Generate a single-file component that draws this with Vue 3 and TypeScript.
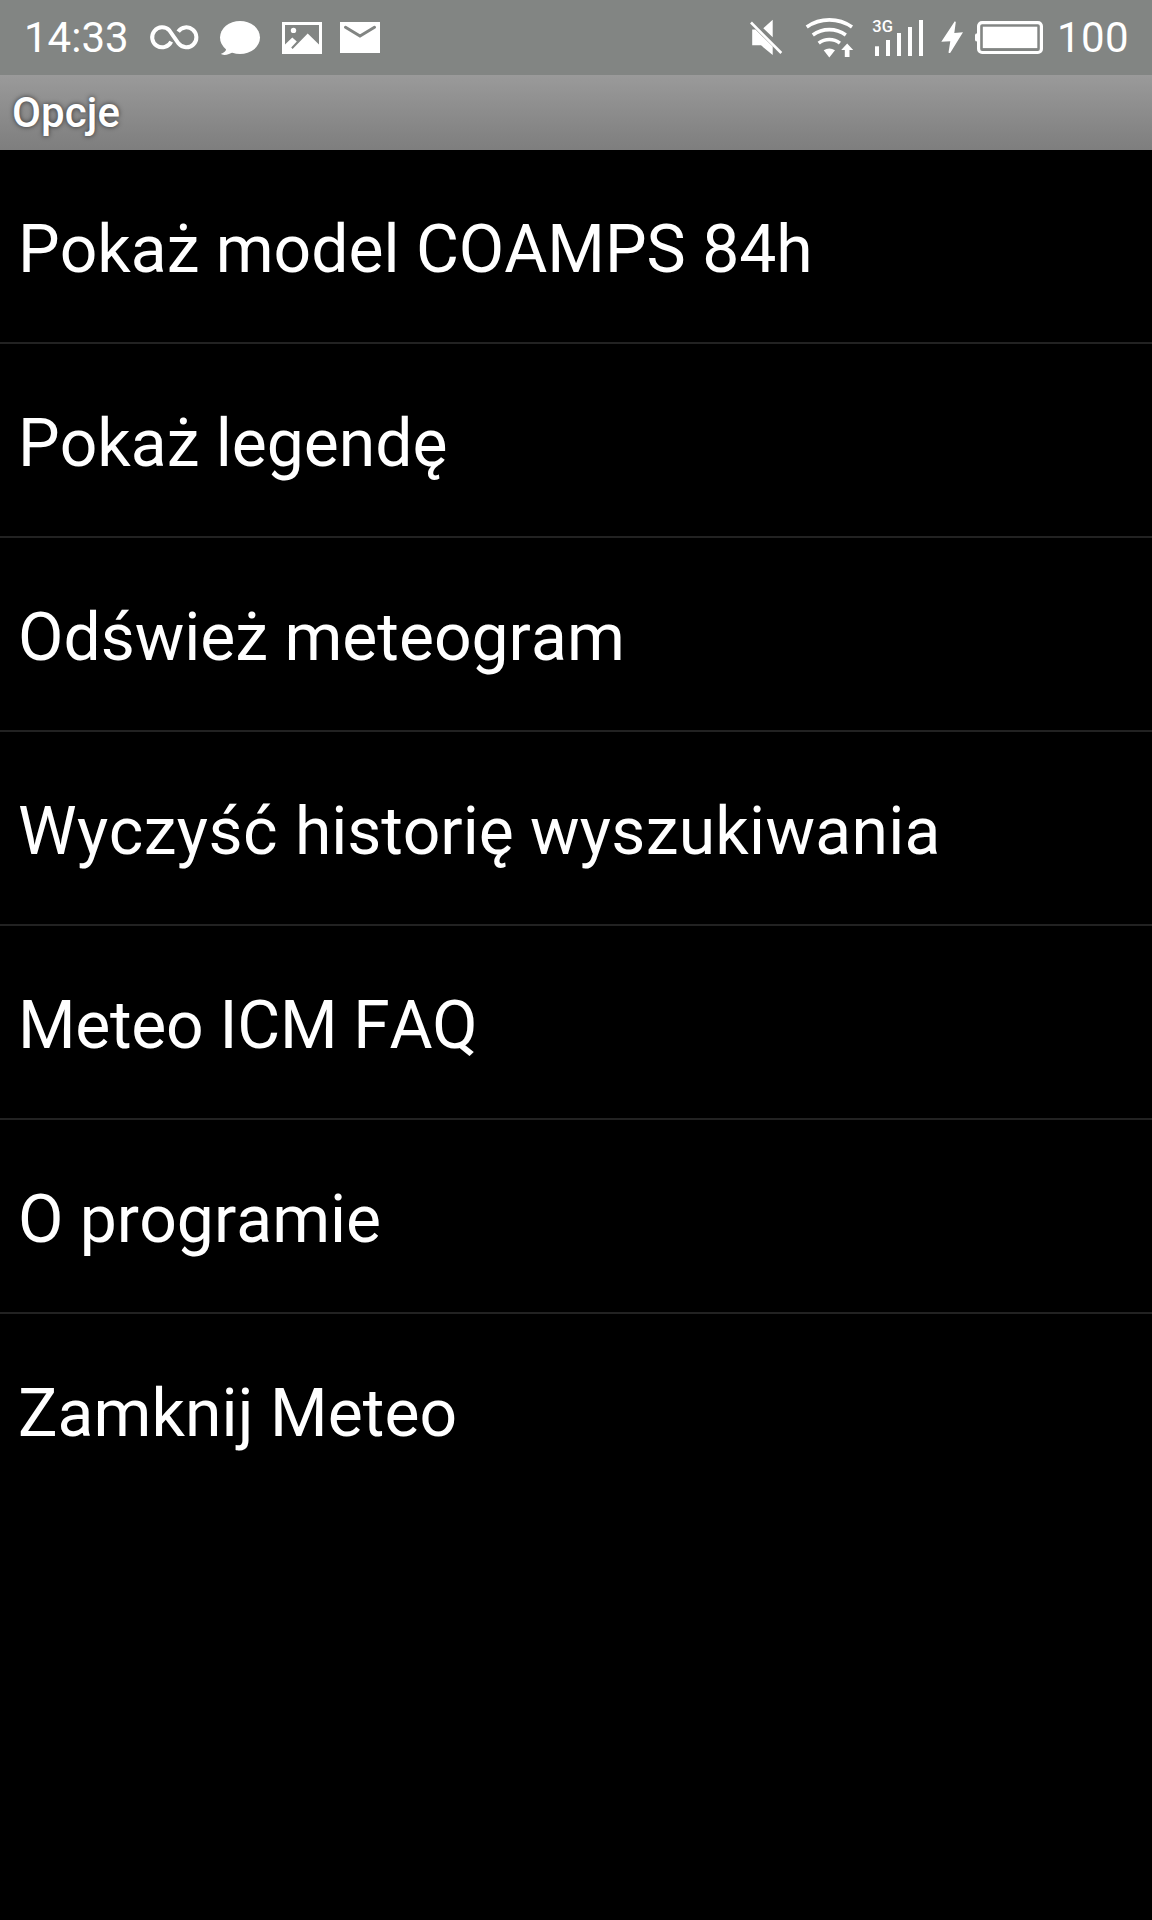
<script setup lang="ts">
interface Bar {
  x: number
  top: number
}

interface Run {
  text: string
  tracking: number
}

// Each option is a list of text runs with their own letter spacing in pixels.
const options: Run[][] = [
  [{ text: 'Pokaż model COAMPS 84h', tracking: 0 }],
  [{ text: 'Pokaż legendę', tracking: 0 }],
  [{ text: 'Odśwież meteogram', tracking: 0 }],
  [
    { text: 'Wyczyść ', tracking: 0.45 },
    { text: 'historię ', tracking: -0.05 },
    { text: 'wyszukiwania', tracking: 0.28 },
  ],
  [{ text: 'Meteo ICM FAQ', tracking: -0.28 }],
  [{ text: 'O programie', tracking: 0 }],
  [{ text: 'Zamknij Meteo', tracking: 0.08 }],
]

const signalBars: Bar[] = [
  { x: 5, top: 46.3 },
  { x: 16, top: 40 },
  { x: 27, top: 33 },
  { x: 38, top: 27 },
  { x: 49, top: 20 },
]
</script>

<template>
  <main class="screen">
    <header class="status">
      <div class="group">
        <span class="label clock">14:33</span>
        <svg class="infinity" width="52" height="75" viewBox="148 0 52 75">
          <path class="line" stroke-width="4" d="M171.2 41.6A10 10 0 1 1 169.4 30.4L178.6 43.6A10 10 0 1 0 178.2 31.6" />
        </svg>
        <svg class="bubble" width="44" height="75" viewBox="218 0 44 75">
          <ellipse cx="240" cy="37.5" rx="20" ry="16.6" />
          <path d="M225.5 46C227.3 50 225 52.500 221 53.800C222 55.500 229 55.500 233.500 51.500Z" />
        </svg>
        <svg class="picture" width="40" height="75" viewBox="282 0 40 75">
          <path fill-rule="evenodd" d="M282 22H322V54H282ZM285 25V44.500L292.300 37.500L296.800 41.500L291.200 47.500L292.600 49L307.700 33.600L319 44.500V25Z" />
          <circle cx="293.500" cy="30.400" r="2.700" />
        </svg>
        <svg class="mail" width="40" height="75" viewBox="340 0 40 75">
          <path d="M340 22H380V53H340Z" />
          <path class="crease" d="M345.500 27.300L360 36L374.500 27.300" />
        </svg>
      </div>
      <div class="group">
        <svg class="mute" width="36" height="75" viewBox="748 0 36 75">
          <path d="M772.700 19.800V37.300L763.300 28.300ZM752.200 29.500H755.500L772.700 46.500V55L761 45.300H752.200Z" />
          <path class="line" stroke-width="2.600" d="M751 22.500L781.300 53" />
        </svg>
        <svg class="wifi" width="50" height="75" viewBox="804 0 50 75">
          <path class="line" stroke-width="3.600" d="M806.700 27A39.700 39.700 0 0 1 852 27M812.800 35A28 28 0 0 1 845.800 35M818.700 43.100A17.300 17.300 0 0 1 839.900 43.100" />
          <path d="M823.700 50.300Q829.300 46.700 835 50.300L829.300 57.400ZM847.200 43.500L853.200 50H849.500V57H844.800V50H841.200Z" />
        </svg>
        <svg class="signal" width="56" height="75" viewBox="0 0 56 75">
          <text x="2.300" y="32">3G</text>
          <rect v-for="bar in signalBars" :key="bar.x" :x="bar.x" :y="bar.top" width="4" :height="56 - bar.top" />
        </svg>
        <svg class="bolt" width="24" height="75" viewBox="940 0 24 75">
          <path d="M954.800 21.300L941.300 41.800L950.300 41.300L948.500 52.500Q949.500 53.600 950.500 52.500L963 32.300L954.300 33L955.800 22Z" />
        </svg>
        <svg class="battery" width="69" height="75" viewBox="975 0 69 75">
          <rect class="shell" x="978.600" y="22.600" width="62.800" height="29.900" rx="3.500" />
          <rect x="982.800" y="26.700" width="54.500" height="21.400" />
          <path d="M977.500 33.300Q975 33.300 975 35V40Q975 41.600 977.500 41.600Z" />
        </svg>
        <span class="label level">100</span>
      </div>
    </header>
    <h1 class="title">Opcje</h1>
    <ul class="options">
      <li v-for="(option, index) in options" :key="index"><span v-for="run in option" :key="run.text" :style="{ letterSpacing: run.tracking + 'px' }">{{ run.text }}</span></li>
    </ul>
  </main>
</template>

<style>
body {
  background: #000;
}
</style>

<style scoped>
.screen {
  width: 1152px;
  height: 1920px;
  overflow: hidden;
  background: #000;
  color: #fff;
  font-family: Roboto, sans-serif;
  font-kerning: none;
}

.status {
  display: flex;
  justify-content: space-between;
  height: 75px;
  padding: 0 23px 0 24px;
  box-sizing: border-box;
  background: #828583;
}

.group {
  display: flex;
}

.label {
  flex: none;
  font-size: 42px;
  line-height: 75px;
}

.clock {
  width: 106px;
}

.level {
  width: 72px;
  letter-spacing: 0.4px;
}

svg {
  display: block;
  flex: none;
  fill: #fff;
}

.line {
  fill: none;
  stroke: #fff;
}

.infinity {
  margin-left: 18px;
}

.bubble {
  margin-left: 18px;
}

.picture {
  margin-left: 20px;
}

.mail {
  margin-left: 18px;
}

.crease {
  fill: none;
  stroke: #828583;
  stroke-width: 3;
  stroke-linecap: round;
}

.wifi {
  margin-left: 20px;
}

.signal {
  margin-left: 16px;
}

.signal text {
  font-size: 16.5px;
  font-weight: 500;
}

.bolt {
  margin-left: 14px;
}

.battery {
  margin: 0 13px 0 11px;
}

.shell {
  fill: none;
  stroke: #fff;
  stroke-width: 3.2;
}

.title {
  height: 75px;
  margin: 0;
  padding-left: 12px;
  background: linear-gradient(#9a9a9a, #7e7e7e);
  font-size: 42px;
  font-weight: 500;
  line-height: 75px;
  letter-spacing: 0.1px;
  text-shadow: 0 0 5px rgba(0, 0, 0, 0.65);
}

.options {
  margin: 0;
  padding: 0;
  list-style: none;
}

.options li {
  height: 192px;
  padding: 4px 0 0 18px;
  box-sizing: border-box;
  font-size: 66px;
  line-height: 192px;
  white-space: pre;
}

.options li + li {
  height: 194px;
  border-top: 2px solid #222;
}
</style>
